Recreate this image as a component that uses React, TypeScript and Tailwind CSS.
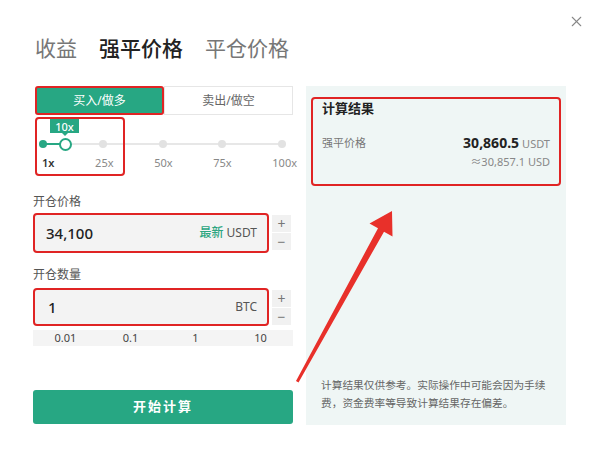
import { X } from "lucide-react";

const GREEN = "#27a783";

function Stepper() {
  return (
    <div className="ml-[3px] mt-[2px] flex w-[19px] flex-col gap-[1px]">
      <div className="flex h-[17px] items-center justify-center bg-[#f1f1f1] text-[14px] leading-none text-[#777]">
        +
      </div>
      <div className="flex h-[17px] items-center justify-center bg-[#f1f1f1] text-[14px] leading-none text-[#777]">
        −
      </div>
    </div>
  );
}

function LeverageSlider() {
  const marks = ["1x", "25x", "50x", "75x", "100x"];
  return (
    <div className="relative h-[61px]">
      <div className="absolute left-[10px] top-[28px] h-[2px] w-[239px] bg-[#e7e7e7]" />
      <div className="absolute left-[10px] top-[28px] h-[2px] w-[22px] bg-[#27a783]" />
      <div className="absolute left-[6px] top-[25px] flex w-[247px] justify-between">
        {marks.map((m, i) => (
          <span
            key={m}
            className={
              "size-[8px] rounded-full " +
              (i === 0 ? "bg-[#27a783]" : "bg-[#e2e2e2]")
            }
          />
        ))}
      </div>
      <span className="absolute left-[26px] top-[23px] size-[13px] rounded-full border-2 border-[#27a783] bg-white" />
      <div className="absolute left-[17px] top-[4px] flex h-[14px] w-[29px] items-center justify-center bg-[#27a783] text-[11px] font-medium leading-none text-white">
        10x
        <span className="absolute left-[12px] top-[14px] border-x-[3px] border-t-[3px] border-x-transparent border-t-[#27a783]" />
      </div>
      <div className="absolute left-[9px] top-[41px] flex w-[255px] justify-between text-[11px] leading-[14px] text-[#888]">
        {marks.map((m, i) => (
          <span key={m} className={i === 0 ? "font-semibold text-[#333]" : ""}>
            {m}
          </span>
        ))}
      </div>
      <div className="absolute left-[2px] top-[2px] h-[59px] w-[90px] rounded-[4px] border-2 border-[#e02424]" />
    </div>
  );
}

export default function App() {
  return (
    <div
      className="relative h-[460px] w-[600px] overflow-hidden bg-white"
      style={{ fontFamily: '"Noto Sans", "Noto Sans CJK SC", sans-serif' }}
    >
      <header className="flex items-center gap-[22px] px-[35px] pt-[36px] text-[21px] leading-[24px] text-[#777]">
        <span>收益</span>
        <span className="font-medium text-[#222]">强平价格</span>
        <span>平仓价格</span>
      </header>
      <X
        size={17}
        strokeWidth={1.5}
        color="#888"
        className="absolute right-[15px] top-[13px]"
      />

      <div className="mt-[26px] flex px-[33px]">
        <div className="flex w-[260px] flex-col">
          <div className="flex h-[29px] text-[12px]">
            <div className="ml-[2px] flex w-[129px] items-center justify-center rounded-[3px] border-2 border-[#e02424] bg-[#27a783] text-white">
              买入/做多
            </div>
            <div className="flex w-[129px] items-center justify-center border border-[#e6e6e6] text-[#666]">
              卖出/做空
            </div>
          </div>

          <LeverageSlider />

          <div className="mt-[19px] text-[12px] leading-[14px] text-[#555]">
            开仓价格
          </div>
          <div className="mt-[4px] flex">
            <div className="flex h-[40px] w-[236px] items-center justify-between rounded-[4px] border-2 border-[#e02424] bg-[#f3f3f3] pl-[11px] pr-[10px]">
              <span className="text-[15px] font-medium text-[#222]">34,100</span>
              <span className="text-[12px] text-[#555]">
                <span className="font-medium text-[#2ba57f]">最新</span> USDT
              </span>
            </div>
            <Stepper />
          </div>

          <div className="mt-[15px] text-[12px] leading-[14px] text-[#555]">
            开仓数量
          </div>
          <div className="mt-[6px] flex">
            <div className="flex h-[38px] w-[236px] items-center justify-between rounded-[4px] border-2 border-[#e02424] bg-[#f3f3f3] pl-[13px] pr-[10px]">
              <span className="text-[15px] font-medium text-[#222]">1</span>
              <span className="text-[12px] text-[#555]">BTC</span>
            </div>
            <Stepper />
          </div>

          <div className="mt-[4px] grid h-[16px] grid-cols-4 items-center bg-[#f4f4f4] text-center text-[11px] text-[#444]">
            <span>0.01</span>
            <span>0.1</span>
            <span>1</span>
            <span>10</span>
          </div>

          <button
            className="mt-[44px] h-[34px] w-full rounded-[3px] text-[13px] font-bold tracking-[2px] text-white"
            style={{ background: GREEN }}
          >
            开始计算
          </button>
        </div>

        <div className="ml-[13px] flex h-[339px] w-[260px] flex-col justify-between bg-[#eff6f5]">
          <div className="mx-[5px] mt-[11px] h-[89px] rounded-[4px] border-2 border-[#e02424] px-[9px]">
            <div className="text-[13px] font-bold leading-[18px] text-[#222]">
              计算结果
            </div>
            <div className="mt-[17px] flex items-center justify-between leading-[16px]">
              <span className="text-[11px] text-[#777]">强平价格</span>
              <span>
                <span className="text-[14px] font-bold text-[#222]">30,860.5</span>
                <span className="ml-[3px] text-[11px] text-[#888]">USDT</span>
              </span>
            </div>
            <div className="mt-[3px] text-right text-[11px] leading-[14px] text-[#888]">
              ≈30,857.1 USD
            </div>
          </div>
          <p className="px-[15px] pb-[13px] text-[10.7px] leading-[18px] text-[#666]">
            计算结果仅供参考。实际操作中可能会因为手续
            <br />
            费，资金费率等导致计算结果存在偏差。
          </p>
        </div>
      </div>

      <svg
        className="pointer-events-none absolute left-0 top-0"
        width="600"
        height="460"
        viewBox="0 0 600 460"
      >
        <polygon
          points="296,381 378,228.3 369.5,223.5 392,211 392.5,236.5 384,231.7 298.5,382.5"
          fill="#e8302a"
        />
      </svg>
    </div>
  );
}
